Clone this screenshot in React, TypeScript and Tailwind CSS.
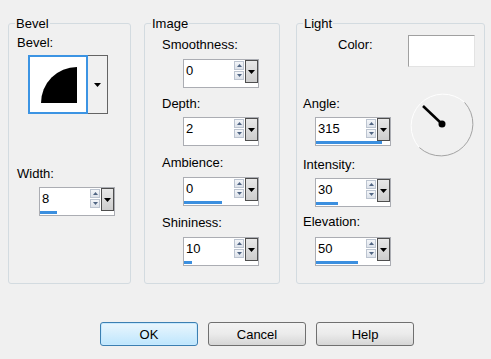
const font = { fontFamily: '"Liberation Sans", Arial, sans-serif' };

type Spin = { label: string; value: string; bar: number; labelMt: string; spinMt: string };

const imageRows: Spin[] = [
  { label: "Smoothness:", value: "0", bar: 0, labelMt: "mt-[13px]", spinMt: "mt-[7px]" },
  { label: "Depth:", value: "2", bar: 0, labelMt: "mt-[8px]", spinMt: "mt-[6px]" },
  { label: "Ambience:", value: "0", bar: 38, labelMt: "mt-[9px]", spinMt: "mt-[7px]" },
  { label: "Shininess:", value: "10", bar: 8, labelMt: "mt-[9px]", spinMt: "mt-[7px]" },
];

const lightRows: Spin[] = [
  { label: "Angle:", value: "315", bar: 66, labelMt: "mt-[29px]", spinMt: "mt-[6px]" },
  { label: "Intensity:", value: "30", bar: 22, labelMt: "mt-[11px]", spinMt: "mt-[6px]" },
  { label: "Elevation:", value: "50", bar: 42, labelMt: "mt-[7px]", spinMt: "mt-[8px]" },
];

function DropArrow() {
  return (
    <svg width="7" height="4" viewBox="0 0 7 4">
      <path d="M0 0H7L3.5 4Z" fill="#000" />
    </svg>
  );
}

function SpinBox({ value, bar, className = "" }: { value: string; bar: number; className?: string }) {
  return (
    <div className={`flex h-[29px] w-[76px] flex-col border border-[#abadb3] bg-white ${className}`}>
      <div className="flex h-[23px]">
        <span className="flex-1 pl-[2px] pt-[3px] text-[13px] leading-[15px] text-black">{value}</span>
        <div className="mt-[1px] flex w-[10px] flex-col gap-[1px]">
          {["M0 3H5L2.5 0Z", "M0 0H5L2.5 3Z"].map((d) => (
            <div
              key={d}
              className="flex h-[9px] items-center justify-center border border-[#bcc4d0] bg-gradient-to-b from-[#f4f6f9] to-[#dde2ea]"
            >
              <svg width="5" height="3" viewBox="0 0 5 3">
                <path d={d} fill="#4f6482" />
              </svg>
            </div>
          ))}
        </div>
        <div className="ml-[1px] flex w-[13px] items-center justify-center border border-[#4e4e4e] bg-gradient-to-b from-[#e8e8e8] to-[#cdcdcd]">
          <DropArrow />
        </div>
      </div>
      <div className="h-[4px]">
        <div className="h-[3px] bg-[#3b8fdf]" style={{ width: bar }} />
      </div>
    </div>
  );
}

function Group({ title, className, children }: { title: string; className: string; children: React.ReactNode }) {
  return (
    <div className={`relative h-[261px] rounded-[3px] border border-[#d3dbe0] ${className}`}>
      <span className="absolute -top-[8px] left-[6px] bg-[#f0f0f0] px-[1px] text-[13px] leading-[15px]">
        {title}
      </span>
      {children}
    </div>
  );
}

function Button({ label, primary }: { label: string; primary?: boolean }) {
  return (
    <button
      type="button"
      className={`h-[24px] w-[98px] rounded-[3px] border text-[13px] leading-[15px] text-black ${
        primary
          ? "border-[#3c7fb1] bg-gradient-to-b from-[#eaf6fd] to-[#bee6fd] shadow-[inset_0_0_0_1px_#c6e9ff]"
          : "border-[#707070] bg-gradient-to-b from-[#f3f3f3] via-[#ebebeb] to-[#d6d6d6]"
      }`}
    >
      {label}
    </button>
  );
}

export default function App() {
  return (
    <div className="h-[359px] w-[491px] bg-[#f0f0f0] pl-[8px] pt-[23px] text-black" style={font}>
      <div className="flex">
        {/* Bevel */}
        <Group title="Bevel" className="w-[123px]">
          <div className="flex flex-col">
            <span className="ml-[8px] mt-[11px] text-[13px] leading-[15px]">Bevel:</span>
            <div className="ml-[19px] mt-[5px] flex h-[59px]">
              <div className="w-[60px] border-2 border-[#3c94e3] bg-white">
                <svg width="56" height="55" viewBox="0 0 56 55">
                  <path d="M11 46A36 36 0 0 1 47 10V46Z" fill="#000" />
                </svg>
              </div>
              <div className="flex w-[20px] items-center justify-center border-y border-r border-[#646464] bg-[#f0f0f0]">
                <DropArrow />
              </div>
            </div>
            <span className="ml-[8px] mt-[52px] text-[13px] leading-[15px]">Width:</span>
            <SpinBox value="8" bar={17} className="ml-[30px] mt-[6px]" />
          </div>
        </Group>

        {/* Image */}
        <Group title="Image" className="ml-[13px] w-[136px]">
          <div className="flex flex-col">
            {imageRows.map((r) => (
              <div key={r.label} className="flex flex-col">
                <span className={`ml-[17px] text-[13px] leading-[15px] ${r.labelMt}`}>{r.label}</span>
                <SpinBox value={r.value} bar={r.bar} className={`ml-[38px] ${r.spinMt}`} />
              </div>
            ))}
          </div>
        </Group>

        {/* Light */}
        <Group title="Light" className="ml-[16px] w-[189px]">
          <div className="mt-[11px] flex items-start">
            <span className="ml-[41px] mt-[2px] text-[13px] leading-[15px]">Color:</span>
            <div className="ml-auto mr-[9px] h-[32px] w-[67px] border border-b-[#e3e3e3] border-l-[#a0a0a0] border-r-[#e3e3e3] border-t-[#a0a0a0] bg-white" />
          </div>
          <div className="flex">
            <div className="ml-[6px] flex flex-col">
              {lightRows.map((r) => (
                <div key={r.label} className="flex flex-col">
                  <span className={`text-[13px] leading-[15px] ${r.labelMt}`}>{r.label}</span>
                  <SpinBox value={r.value} bar={r.bar} className={`ml-[12px] ${r.spinMt}`} />
                </div>
              ))}
            </div>
            <svg className="ml-auto mr-[9px] mt-[25px]" width="66" height="66" viewBox="0 0 66 66">
              <path d="M55.6 10.4A32 32 0 0 0 10.4 55.6" fill="none" stroke="#ffffff" strokeWidth="1" />
              <path d="M10.4 55.6A32 32 0 0 0 55.6 10.4" fill="none" stroke="#a3a3a3" strokeWidth="1" />
              <line x1="14" y1="14" x2="33" y2="32" stroke="#000" strokeWidth="2.5" />
              <circle cx="33" cy="32" r="3.5" fill="#000" />
            </svg>
          </div>
        </Group>
      </div>

      <div className="ml-[92px] mt-[38px] flex gap-[10px]">
        <Button label="OK" primary />
        <Button label="Cancel" />
        <Button label="Help" />
      </div>
    </div>
  );
}
